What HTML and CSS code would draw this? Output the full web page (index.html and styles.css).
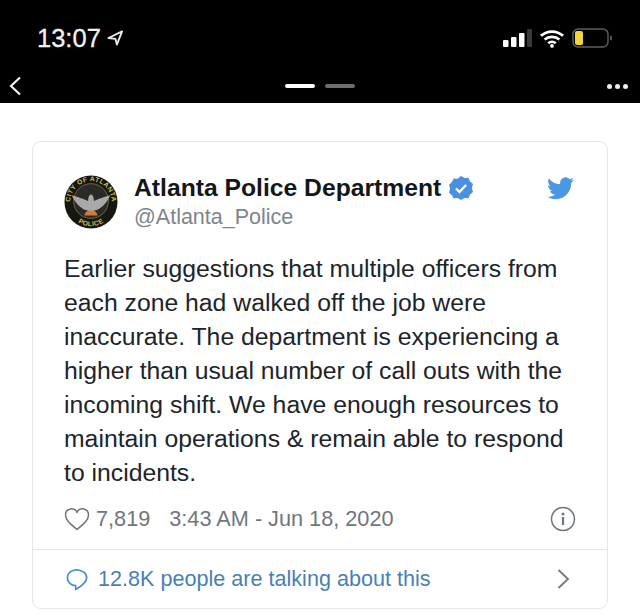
FILE: index.html
```html
<!DOCTYPE html>
<html lang="en">
<head>
	<meta charset="UTF-8">
	<title>Tweet</title>
	<link rel="stylesheet" href="styles.css">
</head>
<body>
	<div class="top">
		<div class="status">
			<div class="time">13:07
				<svg class="arrow" width="16" height="16" viewBox="0 0 17 17"><path d="M16 1.5 1.500 8.500 9 9.500 10.500 15.500Z" fill="none" stroke="#e8e8e8" stroke-width="2" stroke-linejoin="round"/></svg>
			</div>
			<div class="status-icons">
				<svg width="29" height="18" viewBox="0 0 29 18"><rect x="0" y="11" width="5.500" height="7" rx="1" fill="#fff"/><rect x="8" y="8" width="5.500" height="10" rx="1" fill="#fff"/><rect x="16" y="4" width="5.500" height="14" rx="1" fill="#fff"/><rect x="24" y="0" width="5" height="18" rx="1" fill="#3a3a3a"/></svg>
				<svg width="26" height="19" viewBox="0 0 24 18"><path d="M1.500 6.500C7.500 1 16.500 1 22.500 6.500M5 10C9 6.500 15 6.500 19 10M8.500 13.500C10.500 11.800 13.500 11.800 15.500 13.500" fill="none" stroke="#fff" stroke-width="2.600"/><circle cx="12" cy="16" r="1.800" fill="#fff"/></svg>
				<svg width="42" height="20" viewBox="0 0 42 20"><rect x="1" y="1" width="35" height="18" rx="5" fill="none" stroke="#5e5e5e" stroke-width="1.400"/><rect x="3" y="3" width="8" height="14" rx="2" fill="#f2d43d"/><rect x="38" y="7.500" width="2" height="5" rx="1" fill="#555"/></svg>
			</div>
		</div>
		<div class="nav">
			<svg width="12" height="20" viewBox="0 0 12 20"><path d="M11 1.500 2 10l9 8.500" fill="none" stroke="#f0f0f0" stroke-width="2.200"/></svg>
			<div class="pager">
				<span class="dash on"></span>
				<span class="dash"></span>
			</div>
			<div class="dots"><span></span><span></span><span></span></div>
		</div>
	</div>

	<div class="card">
		<div class="tweet">
			<div class="head">
				<svg class="logo" width="54" height="54" viewBox="0 0 56 56">
					<defs><path id="ring-top" d="M9 38A21.500 21.500 0 1 1 47 38"/><path id="ring-bottom" d="M8 43A25 25 0 0 0 48 43"/></defs>
					<circle cx="28" cy="28" r="27.500" fill="#17170f"/>
					<circle cx="28" cy="27" r="18" fill="#2c2a26" stroke="#6b6860" stroke-width="1"/>
					<path d="M21 42C23 34 33 34 35 42Z" fill="#d9782c"/>
					<path d="M28 37C23 38 14 34 8 21 16 23 20 25 25 27 25 23 26 21 28 20 30 21 31 23 31 27 36 25 40 23 48 21 42 34 33 38 28 37Z" fill="#a9a9a9"/>
					<text class="seal"><textPath href="#ring-top" startOffset="50%" text-anchor="middle">CITY OF ATLANTA</textPath></text>
					<text class="seal"><textPath href="#ring-bottom" startOffset="50%" text-anchor="middle">POLICE</textPath></text>
				</svg>
				<div class="who">
					<div class="name">Atlanta Police Department
						<svg class="badge" width="26" height="26" viewBox="0 0 26 26"><path d="M13 1l3.500 2 4-.3 1.500 3.700 3 2.600-1.200 4 1.200 4-3 2.600-1.500 3.700-4-.3-3.500 2-3.500-2-4 .3L4 20.300l-3-2.600L2.200 13.700 1 9.700 4 7.100 5.500 3.400l4 .3z" fill="#4a90e2"/><path d="M8 13.500l3.500 3.500 6.500-7" fill="none" stroke="#fff" stroke-width="2.400"/></svg>
					</div>
					<div class="handle">@Atlanta_Police</div>
				</div>
				<svg class="bird" width="27" height="23" viewBox="0 0 24 20"><path d="M24 2.400a9.800 9.800 0 0 1-2.800.8A4.900 4.900 0 0 0 23.300.5a9.800 9.800 0 0 1-3.100 1.200 4.900 4.900 0 0 0-8.400 4.500A14 14 0 0 1 1.700 1a4.900 4.900 0 0 0 1.500 6.600 4.900 4.900 0 0 1-2.200-.6v.1a4.900 4.900 0 0 0 3.900 4.800 4.900 4.900 0 0 1-2.200.1 4.900 4.900 0 0 0 4.600 3.400A9.900 9.900 0 0 1 0 17.400 14 14 0 0 0 7.500 19.600c9.100 0 14-7.500 14-14v-.6A10 10 0 0 0 24 2.400z" fill="#4a97e6"/></svg>
			</div>
			<p class="body-text">Earlier suggestions that multiple officers from each zone had walked off the job were inaccurate. The department is experiencing a higher than usual number of call outs with the incoming shift. We have enough resources to maintain operations &amp; remain able to respond to incidents.</p>
			<div class="meta">
				<svg width="26" height="24" viewBox="0 0 26 24"><path d="M13 22.500C7 17.500 1.500 13.500 1.500 8A6 6 0 0 1 13 5.500 6 6 0 0 1 24.500 8C24.500 13.500 19 17.500 13 22.500Z" fill="none" stroke="#6f767c" stroke-width="1.500" stroke-linejoin="round"/></svg>
				<span class="count">7,819</span>
				<span class="stamp">3:43 AM - Jun 18, 2020</span>
				<svg class="info" width="26" height="26" viewBox="0 0 26 26"><circle cx="13" cy="13" r="11.500" fill="none" stroke="#6f767c" stroke-width="1.500"/><circle cx="13" cy="8" r="1.500" fill="#6f767c"/><rect x="11.900" y="11" width="2.200" height="8" fill="#6f767c"/></svg>
			</div>
		</div>
		<div class="talk">
			<svg width="22" height="23" viewBox="0 0 25 26"><path d="M12 2C6 2 1.500 6 1.500 11S6 20 11 20V24.500C16 21.500 23.500 17 23.500 11 23.500 6 18.500 2 12 2Z" fill="none" stroke="#4a8fd0" stroke-width="2" stroke-linejoin="round"/></svg>
			<span class="talk-text">12.8K people are talking about this</span>
			<svg class="chev" width="13" height="20" viewBox="0 0 13 20"><path d="M1.500 1 11 10l-9.500 9" fill="none" stroke="#6f767c" stroke-width="1.800"/></svg>
		</div>
	</div>
</body>
</html>
```

FILE: styles.css
```css
body {
	margin: 0;
	background: #fff;
	font-family: "Liberation Sans", Arial, sans-serif;
	overflow: hidden;
}
.top {
	height: 103px;
	background: #000;
	color: #f2f2f2;
	padding: 0 12px 0 9px;
	box-sizing: border-box;
}
.status {
	display: flex;
	justify-content: space-between;
	align-items: center;
	height: 76px;
	padding: 0 14px 0 28px;
}
.time {
	display: flex;
	align-items: center;
	gap: 6px;
	font-size: 25.500px;
	-webkit-text-stroke: 0.3px #f2f2f2;
}
.status-icons {
	display: flex;
	align-items: center;
	gap: 7px;
}
.nav {
	display: flex;
	justify-content: space-between;
	align-items: center;
	height: 20px;
}
.pager {
	display: flex;
	gap: 10px;
	padding-left: 11px;
}
.dash {
	width: 30px;
	height: 4px;
	border-radius: 2px;
	background: #6e6e6e;
}
.dash.on {
	background: #fff;
}
.dots {
	display: flex;
	gap: 3px;
}
.dots span {
	width: 5px;
	height: 5px;
	border-radius: 50%;
	background: #f0f0f0;
}
.card {
	margin: 38px 32px 0;
	height: 468px;
	border: 1px solid #e4e6e8;
	border-radius: 9px;
	display: flex;
	flex-direction: column;
	box-sizing: border-box;
}
.tweet {
	flex: 1;
	padding: 0 31px;
	border-bottom: 1px solid #e4e6e8;
}
.head {
	display: flex;
	align-items: center;
	gap: 16px;
	padding-top: 30px;
}
.logo {
	flex: none;
}
.seal {
	font-size: 7px;
	font-weight: bold;
	fill: #c9bd55;
	letter-spacing: .4px;
}
.who {
	flex: 1;
}
.name {
	display: flex;
	align-items: center;
	gap: 7px;
	font-size: 24.700px;
	font-weight: bold;
	color: #14171a;
	height: 32px;
}
.handle {
	font-size: 21.500px;
	color: #7d858c;
	height: 26px;
	margin-top: 1px;
}
.bird {
	margin: -27px 2px 0 0;
}
.body-text {
	margin: 21px 0 0;
	font-size: 24.750px;
	line-height: 34px;
	color: #202428;
}
.meta {
	display: flex;
	align-items: center;
	margin-top: 16px;
	font-size: 21.700px;
	color: #6f767c;
}
.count {
	margin-left: 6px;
}
.stamp {
	flex: 1;
	margin-left: 19px;
}
.talk {
	display: flex;
	align-items: center;
	height: 58px;
	padding: 0 37px 0 33px;
	font-size: 21.600px;
	color: #4a7fb5;
}
.talk-text {
	flex: 1;
	margin-left: 10px;
}
```
